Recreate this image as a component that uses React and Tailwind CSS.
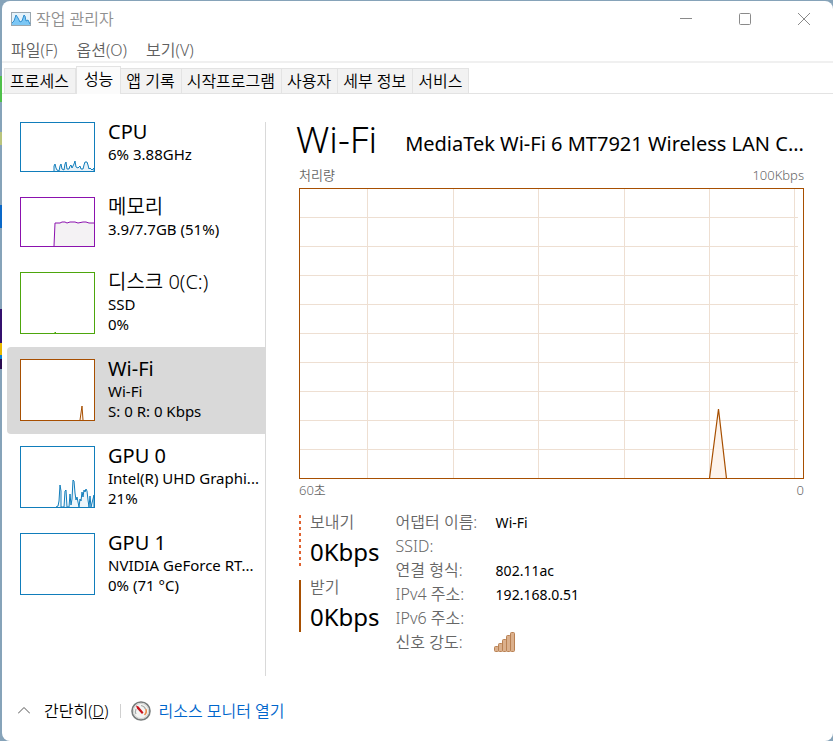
import React, { useState } from "react";

const MENUS = ["파일(F)", "옵션(O)", "보기(V)"];

const TABS = ["프로세스", "성능", "앱 기록", "시작프로그램", "사용자", "세부 정보", "서비스"];

// Sidebar resources; points are drawn inside a 73px wide box
const RESOURCES = [
  {
    id: "cpu",
    name: "CPU",
    nameClass: "font-normal",
    lines: ["6% 3.88GHz"],
    color: "#117dbb",
    fill: "#e7f1f8",
    height: 48,
    points:
      "33,48 33,43 34,41 35,45 36,47 38,48 39,43 40,41 41,46 43,47 44,41 45,39 46,46 48,46 49,43 50,42 51,45 53,41 54,38 55,44 57,45 59,43 60,46 62,46 63,42 64,39 66,39 67,42 68,46 69,45 71,47 73,45 73,48",
  },
  {
    id: "memory",
    name: "메모리",
    nameClass: "font-[350]",
    lines: ["3.9/7.7GB (51%)"],
    color: "#8b12ae",
    fill: "#f4f2f4",
    height: 48,
    points: "33,48 34,25 39,25 41,24 44,24 46,25 49,24 54,24 57,25 62,24 65,24 68,25 74,25 74,48",
  },
  {
    id: "disk",
    name: "디스크 0(C:)",
    nameClass: "font-[350]",
    lines: ["SSD", "0%"],
    color: "#4da60c",
    fill: "#eff7e9",
    height: 60,
    points: "34,60 34,59 35,60",
  },
  {
    id: "wifi",
    name: "Wi-Fi",
    nameClass: "font-normal",
    lines: ["Wi-Fi", "S: 0 R: 0 Kbps"],
    color: "#a74f01",
    fill: "#fdf3eb",
    height: 60,
    points: "59,60 61,46 62,60",
  },
  {
    id: "gpu0",
    name: "GPU 0",
    nameClass: "font-normal",
    lines: ["Intel(R) UHD Graphi...", "21%"],
    color: "#117dbb",
    fill: "#eef5fa",
    height: 60,
    points:
      "35,60 37,59 38,54 39,38 40,44 40,60 43,60 44,44 45,43 46,60 48,60 49,47 50,58 51,52 52,33 53,34 54,46 55,53 56,50 58,60 59,52 60,54 61,45 62,50 63,43 64,45 65,42 66,44 67,53 68,60 69,49 70,60 72,52 73,48 73,60",
  },
  {
    id: "gpu1",
    name: "GPU 1",
    nameClass: "font-normal",
    lines: ["NVIDIA GeForce RT...", "0% (71 °C)"],
    color: "#117dbb",
    fill: "none",
    height: 60,
    points: "",
  },
];

const DETAILS = [
  ["어댑터 이름:", "Wi-Fi"],
  ["SSID:", ""],
  ["연결 형식:", "802.11ac"],
  ["IPv4 주소:", "192.168.0.51"],
  ["IPv6 주소:", ""],
];

function AppIcon() {
  return (
    <svg width="20" height="14" viewBox="0 0 20 14" aria-hidden="true">
      <rect x="0.5" y="0.5" width="19" height="13" fill="#e4f2fa" stroke="#9aa7b0" />
      <path d="M1 13V11L3 9 5 3 7 6 9 10 11 9 13 3 14 4 15 9 17 8 19 12V13H1Z" fill="#7cc7f5" />
      <path d="M1 11L3 9 5 3 7 6 9 10 11 9 13 3 14 4 15 9 17 8 19 12" fill="none" stroke="#2f8fd0" />
    </svg>
  );
}

function GaugeIcon() {
  return (
    <svg width="20" height="20" viewBox="0 0 20 20" aria-hidden="true">
      <circle cx="10" cy="10" r="9" fill="#f4f4f2" stroke="#777b7b" strokeWidth="1.6" />
      <circle cx="10" cy="10" r="7.6" fill="none" stroke="#cfd2d0" />
      <path d="M5 13A6 6 0 0 1 5 8" fill="none" stroke="#a5aaa8" strokeWidth="1.2" />
      <path d="M10 4.5A5.5 5.5 0 0 1 14.5 8" fill="none" stroke="#a5aaa8" strokeWidth="1.2" />
      <path d="M14.8 8A5.5 5.5 0 0 1 13.5 14" fill="none" stroke="#e98a4a" strokeWidth="1.6" />
      <path d="M5 4.500L7.500 5.500 12.500 11.500 11 13 6 7.500Z" fill="#c8141c" />
    </svg>
  );
}

function SignalIcon() {
  return (
    <svg width="21" height="20" viewBox="0 0 21 20" role="img" aria-label="신호 강도">
      <g fill="#dbb08c" stroke="#b98153">
        <rect x="0.5" y="14.5" width="4" height="5" rx="1" />
        <rect x="4.5" y="11.5" width="4" height="8" rx="1" />
        <rect x="8.5" y="7.5" width="4" height="12" rx="1" />
        <rect x="12.5" y="3.5" width="4" height="16" rx="1" />
        <rect x="16.5" y="0.5" width="4" height="19" rx="1" />
      </g>
    </svg>
  );
}

function ResourceItem({ item, selected, onSelect }) {
  return (
    <button
      type="button"
      onClick={onSelect}
      className={`flex w-full items-start gap-[13px] rounded-l-sm pl-[13px] pt-3 pb-[13px] text-left ${
        selected ? "bg-[#d9d9d9]" : ""
      }`}
    >
      <span className="shrink-0 border bg-white" style={{ borderColor: item.color }}>
        <svg width="73" height={item.height} className="block" aria-hidden="true">
          <polyline points={item.points} fill={item.fill} stroke={item.color} />
        </svg>
      </span>
      <span className="-mt-0.5 -mb-1 block min-w-0 text-[15px] leading-5 font-normal whitespace-nowrap">
        <span className={`block text-[20px] leading-6 ${item.nameClass}`}>{item.name}</span>
        {item.lines.map((line) => (
          <span key={line} className="block">{line}</span>
        ))}
      </span>
    </button>
  );
}

function ThroughputChart() {
  const columns = [68, 154, 239, 325, 410, 495];
  const rows = [29, 58, 87, 116, 145, 174, 203, 232, 261];

  return (
    <div className="border border-[#a74f01]">
      <svg className="block h-[289px] w-full" viewBox="1 1 503 289" preserveAspectRatio="none" role="img" aria-label="처리량">
        <g stroke="#eedfd2">
          {columns.map((x) => (
            <path key={x} d={`M${x + 0.5} 0V291`} />
          ))}
          {rows.map((y) => (
            <path key={y} d={`M0 ${y + 0.5}H499`} />
          ))}
        </g>
        <path d="M410.5 290.5L419.5 221 427.5 290.5" fill="#fdf3eb" stroke="#a74f01" strokeWidth="1.2" />
      </svg>
    </div>
  );
}

export default function App() {
  const [tab, setTab] = useState("성능");
  const [resource, setResource] = useState("wifi");

  return (
    <div className="min-h-screen bg-[linear-gradient(#86a3b9_76px,#4fc04a_76px,#4fc04a_102px,#86a3b9_102px,#86a3b9_132px,#b9c47c_132px,#b9c47c_145px,#86a3b9_145px,#86a3b9_205px,#0a68c8_205px,#0a68c8_228px,#86a3b9_228px,#86a3b9_309px,#34106e_309px,#34106e_343px,#e8b800_343px,#e8b800_355px,#0a80d0_355px,#0a80d0_359px,#2a0a50_359px,#2a0a50_369px,#86a3b9_369px)] pt-px pl-0.5 font-['Noto_Sans','Noto_Sans_CJK_KR',sans-serif] font-[350] text-black">
      <div className="flex min-h-[calc(100vh-1px)] flex-col rounded-lg bg-white">
        {/* Title bar */}
        <header className="flex h-9 items-center pl-[9px]">
          <AppIcon />
          <h1 className="ml-[5px] text-[16px] font-[350] text-[#909090]">작업 관리자</h1>
          <div className="ml-auto flex items-center text-[#8a8a8a]">
            <button type="button" aria-label="최소화" className="flex h-8 w-[58px] items-center justify-center">
              <svg width="12" height="12"><path d="M0 5.5H12" stroke="currentColor" /></svg>
            </button>
            <button type="button" aria-label="최대화" className="flex h-8 w-[59px] items-center justify-center">
              <svg width="12" height="12"><rect x="0.5" y="0.5" width="11" height="11" rx="1" fill="none" stroke="currentColor" /></svg>
            </button>
            <button type="button" aria-label="닫기" className="flex h-8 w-[59px] items-center justify-center">
              <svg width="12" height="12"><path d="M0 0L12 12M12 0L0 12" stroke="currentColor" /></svg>
            </button>
          </div>
        </header>

        <nav className="flex h-[26px] items-center gap-[19px] border-b-2 border-[#f0f0f0] pt-0.5 pl-[9px] text-[16px] text-[#606060]">
          {MENUS.map((menu) => (
            <button key={menu} type="button">{menu}</button>
          ))}
        </nav>

        {/* Tabs */}
        <div role="tablist" className="flex h-[31px] items-end border-b border-[#e3e3e3] pl-0.5 text-[16px]">
          {TABS.map((name) => (
            <button
              key={name}
              type="button"
              role="tab"
              aria-selected={tab === name}
              onClick={() => setTab(name)}
              className={
                tab === name
                  ? "-mb-px h-7 border border-b-0 border-[#e3e3e3] bg-[#fbfbfb] px-[7px] pb-1 leading-6"
                  : "h-[25px] border border-b-0 border-l-0 border-[#e3e3e3] bg-[#f2f2f2] pr-[6px] pl-[5px] leading-6 first:border-l"
              }
            >
              {name}
            </button>
          ))}
        </div>

        <main className="flex flex-1">
          <aside className="mt-4 mb-0.5 flex w-[263px] shrink-0 flex-col pl-[5px]">
            {RESOURCES.map((item) => (
              <ResourceItem
                key={item.id}
                item={item}
                selected={resource === item.id}
                onSelect={() => setResource(item.id)}
              />
            ))}
          </aside>
          <div className="mt-7 w-px shrink-0 bg-[#d9d9d9]" />

          <section className="mt-5 min-w-0 flex-1 pr-[29px] pl-[33px]">
            <div className="flex items-end justify-between gap-4 whitespace-nowrap">
              <h2 className="-ml-[3px] text-[37px] leading-[50px] font-light">Wi-Fi</h2>
              <p className="text-[20px] leading-10 font-normal">MediaTek Wi-Fi 6 MT7921 Wireless LAN C...</p>
            </div>
            <div className="my-1 flex h-4 items-center justify-between text-[13px] text-[#666]">
              <span>처리량</span>
              <span>100Kbps</span>
            </div>
            <ThroughputChart />
            <div className="mt-1 flex h-4 items-center justify-between text-[13px] text-[#666]">
              <span>60초</span>
              <span>0</span>
            </div>

            <div className="mt-3 flex gap-4">
              <div className="mt-1 flex flex-col gap-3.5">
                <div className="flex gap-[9px]">
                  <div className="w-0.5 bg-[repeating-linear-gradient(#e0622f_0_3px,transparent_3px_6px)]" />
                  <div className="h-[51px]">
                    <div className="text-[16px] leading-3.5 text-[#666]">보내기</div>
                    <div className="mt-[7px] text-[24px] leading-8 font-normal">0Kbps</div>
                  </div>
                </div>
                <div className="flex gap-[9px]">
                  <div className="w-0.5 bg-[#a74f01]" />
                  <div className="h-[52px]">
                    <div className="text-[16px] leading-3.5 text-[#666]">받기</div>
                    <div className="mt-[7px] text-[24px] leading-8 font-normal">0Kbps</div>
                  </div>
                </div>
              </div>

              <dl className="-mt-px grid auto-rows-[24px] grid-cols-[100px_1fr] items-center">
                {DETAILS.map(([label, value]) => (
                  <React.Fragment key={label}>
                    <dt className="text-[16px] text-[#666]">{label}</dt>
                    <dd className="text-[14px] font-normal">{value}</dd>
                  </React.Fragment>
                ))}
                <dt className="text-[16px] text-[#666]">신호 강도:</dt>
                <dd className="-ml-0.5"><SignalIcon /></dd>
              </dl>
            </div>
          </section>
        </main>

        <footer className="flex h-[65px] items-center pt-1 pl-4 text-[16px]">
          <button type="button" className="flex items-center gap-3.5">
            <svg width="12" height="7" aria-hidden="true"><path d="M0 6.5L6 0.5 12 6.5" fill="none" stroke="#555" /></svg>
            <span>간단히(<u>D</u>)</span>
          </button>
          <div className="mr-2.5 ml-3 h-3.5 w-px bg-[#d0d0d0]" />
          <a href="#resource-monitor" className="flex items-center gap-[7px] text-[#0066cc]">
            <GaugeIcon />
            리소스 모니터 열기
          </a>
        </footer>
      </div>
    </div>
  );
}
